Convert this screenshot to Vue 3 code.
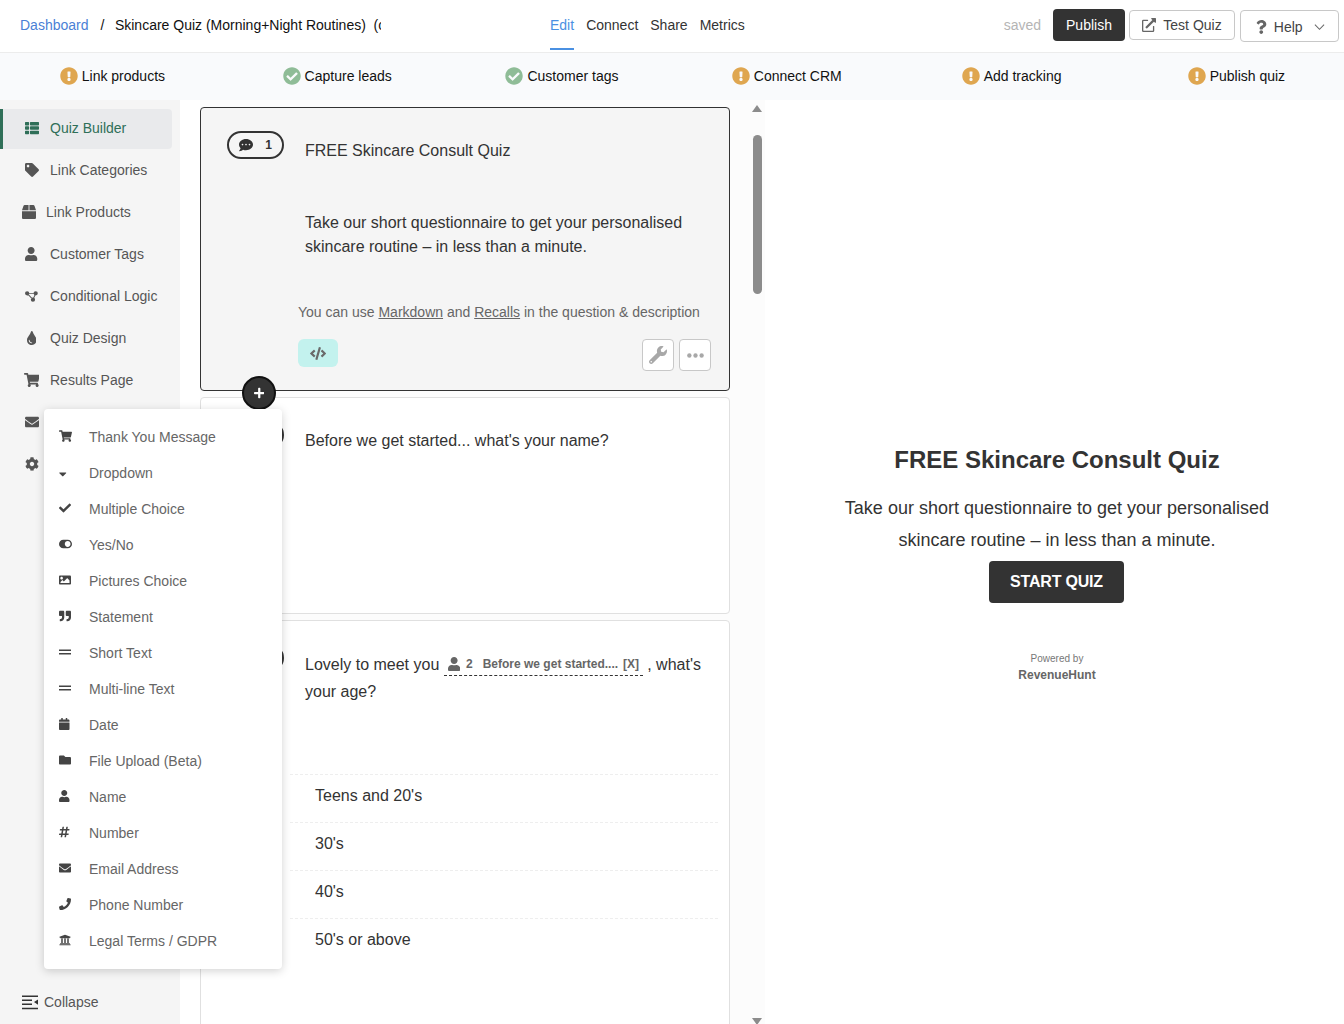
<template>
  <div class="page">
    <header class="topbar">
      <div class="crumbs">
        <a class="crumb-link">Dashboard</a>
        <span class="crumb-sep">/</span>
        <span class="crumb-title">Skincare Quiz (Morning+Night Routines)&nbsp; (copy)</span>
      </div>
      <nav class="tabs">
        <a v-for="(t, i) in tabs" :key="t" class="tab" :class="{ active: i === 0 }">{{ t }}</a>
      </nav>
      <div class="actions">
        <span class="saved">saved</span>
        <button class="btn btn-dark">Publish</button>
        <button class="btn btn-line btn-test"><FaIcon name="external" class="btn-icon" />Test Quiz</button>
        <button class="btn btn-line btn-help">
          <FaIcon name="question" class="btn-icon" />Help
          <svg class="chev" viewBox="0 0 12 8"><path d="M1 1.5l5 5 5-5" fill="none" stroke="currentColor" stroke-width="1.1" /></svg>
        </button>
      </div>
    </header>

    <div class="steps">
      <div v-for="s in steps" :key="s.label" class="step">
        <FaIcon :name="s.done ? 'checkCircle' : 'exclaim'" class="step-icon" :class="s.done ? 'done' : 'todo'" />
        {{ s.label }}
      </div>
    </div>

    <div class="body">
      <aside class="sidebar">
        <a
          v-for="(n, i) in nav"
          :key="n.icon"
          class="nav-item"
          :class="{ active: i === 0, narrow: n.icon === 'box' }"
        >
          <span class="nav-icon"><FaIcon :name="n.icon" class="nav-svg" :class="n.icon" /></span>
          <span v-if="n.label">{{ n.label }}</span>
        </a>
        <a class="collapse">
          <svg class="collapse-icon" viewBox="0 0 16 15">
            <path d="M0 .5h16v1.6H0zM0 4.5h10v1.6H0zM0 8.5h10v1.6H0zM0 12.7h16v1.6H0zM16 4.4v5.4l-4-2.7z" fill="currentColor" />
          </svg>
          Collapse
        </a>
      </aside>

      <main class="builder">
        <section class="card card-selected">
          <div class="card-head">
            <span class="pill"><FaIcon name="comment" class="pill-icon" /><b>1</b></span>
            <div class="question">FREE Skincare Consult Quiz</div>
          </div>
          <p class="description">Take our short questionnaire to get your personalised skincare routine – in less than a minute.</p>
          <p class="hint">You can use <u>Markdown</u> and <u>Recalls</u> in the question &amp; description</p>
          <div class="card-tools">
            <button class="code-btn"><FaIcon name="code" class="code-icon" /></button>
            <span class="tools-right">
              <button class="tool-btn"><FaIcon name="wrench" class="wrench-icon" /></button>
              <button class="tool-btn">
                <svg class="dots" viewBox="0 0 18 5"><circle cx="2.5" cy="2.5" r="2.3" /><circle cx="9" cy="2.5" r="2.3" /><circle cx="15.5" cy="2.5" r="2.3" /></svg>
              </button>
            </span>
          </div>
          <button class="add-btn"><FaIcon name="plus" class="add-icon" /></button>
        </section>

        <section class="card card-name">
          <div class="card-head">
            <span class="pill"><FaIcon name="comment" class="pill-icon" /><b>2</b></span>
            <div class="question">Before we get started... what's your name?</div>
          </div>
        </section>

        <section class="card card-age">
          <div class="card-head">
            <span class="pill"><FaIcon name="comment" class="pill-icon" /><b>3</b></span>
            <div class="question question-age">
              Lovely to meet you
              <span class="recall"><FaIcon name="user" class="recall-icon" /><b class="recall-num">2</b><b>Before we get started....</b><b class="recall-x">[X]</b></span>
              , what's your age?
            </div>
          </div>
          <ul class="options">
            <li v-for="o in ageOptions" :key="o">{{ o }}</li>
          </ul>
        </section>
      </main>

      <div class="scrollbar">
        <span class="arrow arrow-up"></span>
        <span class="thumb"></span>
        <span class="arrow arrow-down"></span>
      </div>

      <section class="preview">
        <h1 class="preview-title">FREE Skincare Consult Quiz</h1>
        <p class="preview-text">Take our short questionnaire to get your personalised skincare routine – in less than a minute.</p>
        <button class="start-btn">START QUIZ</button>
        <div class="powered">Powered by</div>
        <div class="brand">RevenueHunt</div>
      </section>

      <div class="add-menu">
        <div v-for="b in blocks" :key="b.label" class="menu-row">
          <span class="menu-icon"><FaIcon :name="b.icon" class="menu-svg" :class="b.icon" /></span>
          {{ b.label }}
        </div>
      </div>
    </div>
  </div>
</template>

<script setup>
import { h } from 'vue'

const icons = {
  exclaim: [512, 'M504 256c0 136.997-111.043 248-248 248S8 392.997 8 256C8 119.083 119.043 8 256 8s248 111.083 248 248zm-248 50c-25.405 0-46 20.595-46 46s20.595 46 46 46 46-20.595 46-46-20.595-46-46-46zm-43.673-165.346l7.418 136c.347 6.364 5.609 11.346 11.982 11.346h48.546c6.373 0 11.635-4.982 11.982-11.346l7.418-136c.375-6.874-5.098-12.654-11.982-12.654h-63.383c-6.884 0-12.356 5.78-11.981 12.654z'],
  checkCircle: [512, 'M504 256c0 136.967-111.033 248-248 248S8 392.967 8 256 119.033 8 256 8s248 111.033 248 248zM227.314 387.314l184-184c6.248-6.248 6.248-16.379 0-22.627l-22.627-22.627c-6.248-6.249-16.379-6.249-22.628 0L216 308.118l-70.059-70.059c-6.248-6.248-16.379-6.248-22.628 0l-22.627 22.627c-6.248 6.248-6.248 16.379 0 22.627l104 104c6.249 6.249 16.379 6.249 22.628.001z'],
  list: [512, 'M149.333 216v80c0 13.255-10.745 24-24 24H24c-13.255 0-24-10.745-24-24v-80c0-13.255 10.745-24 24-24h101.333c13.255 0 24 10.745 24 24zM0 376v80c0 13.255 10.745 24 24 24h101.333c13.255 0 24-10.745 24-24v-80c0-13.255-10.745-24-24-24H24c-13.255 0-24 10.745-24 24zM125.333 32H24C10.745 32 0 42.745 0 56v80c0 13.255 10.745 24 24 24h101.333c13.255 0 24-10.745 24-24V56c0-13.255-10.745-24-24-24zm80 448H488c13.255 0 24-10.745 24-24v-80c0-13.255-10.745-24-24-24H205.333c-13.255 0-24 10.745-24 24v80c0 13.255 10.745 24 24 24zm-24-424v80c0 13.255 10.745 24 24 24H488c13.255 0 24-10.745 24-24V56c0-13.255-10.745-24-24-24H205.333c-13.255 0-24 10.745-24 24zm24 264H488c13.255 0 24-10.745 24-24v-80c0-13.255-10.745-24-24-24H205.333c-13.255 0-24 10.745-24 24v80c0 13.255 10.745 24 24 24z'],
  tag: [512, 'M0 252.118V48C0 21.49 21.49 0 48 0h204.118a48 48 0 0 1 33.941 14.059l211.882 211.882c18.745 18.745 18.745 49.137 0 67.882L293.823 497.941c-18.745 18.745-49.137 18.745-67.882 0L14.059 286.059A48 48 0 0 1 0 252.118zM112 64c-26.51 0-48 21.49-48 48s21.49 48 48 48 48-21.49 48-48-21.49-48-48-48z'],
  box: [512, 'M509.5 184.6L458.9 32.8C452.4 13.2 434.1 0 413.4 0H272v192h238.7c-.4-2.5-.4-5-1.2-7.4zM240 0H98.6c-20.7 0-39 13.2-45.5 32.8L2.5 184.6c-.8 2.4-.8 4.9-1.2 7.4H240V0zM0 224v240c0 26.5 21.5 48 48 48h416c26.5 0 48-21.5 48-48V224H0z'],
  user: [448, 'M224 256c70.7 0 128-57.3 128-128S294.7 0 224 0 96 57.3 96 128s57.3 128 128 128zm89.6 32h-16.7c-22.2 10.2-46.9 16-72.9 16s-50.6-5.8-72.9-16h-16.7C60.2 288 0 348.2 0 422.4V464c0 26.5 21.5 48 48 48h352c26.5 0 48-21.5 48-48v-41.6c0-74.2-60.2-134.4-134.4-134.4z'],
  // three round nodes joined by thin links
  diagram: [597, 'M0 110a100 100 0 1 1 200 0a100 100 0 1 1-200 0zM397 110a100 100 0 1 1 200 0a100 100 0 1 1-200 0zM270 405a100 100 0 1 1 200 0a100 100 0 1 1-200 0zM100 90H497V130H100zM90 125L120 95L385 385L355 415zM480 95L520 115L390 420L350 400z'],
  tint: [352, 'M205.22 22.09c-7.94-28.78-49.44-30.12-58.44 0C100.01 179.85 0 222.72 0 333.91 0 432.35 78.72 512 176 512s176-79.65 176-178.09c0-111.75-99.79-153.34-146.78-311.82zM176 448c-61.75 0-112-50.25-112-112 0-8.84 7.16-16 16-16s16 7.16 16 16c0 44.11 35.89 80 80 80 8.84 0 16 7.16 16 16s-7.16 16-16 16z'],
  cart: [576, 'M528.12 301.319l47.273-208C578.806 78.301 567.391 64 551.99 64H159.208l-9.166-44.81C147.758 8.021 137.93 0 126.529 0H24C10.745 0 0 10.745 0 24v16c0 13.255 10.745 24 24 24h69.883l70.248 343.435C147.325 417.1 136 435.222 136 456c0 30.928 25.072 56 56 56s56-25.072 56-56c0-15.674-6.447-29.835-16.824-40h209.647C430.447 426.165 424 440.326 424 456c0 30.928 25.072 56 56 56s56-25.072 56-56c0-22.172-12.888-41.332-31.579-50.405l5.517-24.276c3.413-15.018-8.002-29.319-23.403-29.319H218.117l-6.545-32h293.145c11.206 0 20.92-7.754 23.403-18.681z'],
  envelope: [512, 'M502.3 190.8c3.9-3.1 9.7-.2 9.7 4.7V400c0 26.5-21.5 48-48 48H48c-26.5 0-48-21.5-48-48V195.6c0-5 5.7-7.8 9.7-4.7 22.4 17.4 52.1 39.5 154.1 113.6 21.1 15.4 56.7 47.8 92.2 47.6 35.7.3 72-32.8 92.3-47.6 102-74.1 131.6-96.3 154-113.7zM256 320c23.2.4 56.6-29.2 73.4-41.4 132.7-96.3 142.8-104.7 173.4-128.7 5.8-4.5 9.2-11.5 9.2-18.9v-19c0-26.5-21.5-48-48-48H48C21.5 64 0 85.5 0 112v19c0 7.4 3.4 14.3 9.2 18.9 30.6 23.9 40.7 32.4 173.4 128.7 16.8 12.2 50.2 41.8 73.4 41.4z'],
  cog: [512, 'M487.4 315.7l-42.6-24.6c4.3-23.2 4.3-47 0-70.2l42.6-24.6c4.9-2.8 7.1-8.6 5.5-14-11.1-35.6-30-67.8-54.7-94.6-3.8-4.1-10-5.1-14.8-2.3L380.8 110c-17.9-15.4-38.5-27.3-60.8-35.1V25.8c0-5.6-3.9-10.5-9.4-11.7-36.7-8.2-74.3-7.8-109.2 0-5.5 1.2-9.4 6.1-9.4 11.7V75c-22.2 7.9-42.8 19.8-60.8 35.1L88.7 85.5c-4.9-2.8-11-1.9-14.8 2.3-24.7 26.7-43.6 58.9-54.7 94.6-1.7 5.4.6 11.2 5.5 14L67.3 221c-4.3 23.2-4.3 47 0 70.2l-42.6 24.6c-4.9 2.8-7.1 8.6-5.5 14 11.1 35.6 30 67.8 54.7 94.6 3.8 4.1 10 5.1 14.8 2.3l42.6-24.6c17.9 15.4 38.5 27.3 60.8 35.1v49.2c0 5.6 3.9 10.5 9.4 11.7 36.7 8.2 74.3 7.8 109.2 0 5.5-1.2 9.4-6.1 9.4-11.7v-49.2c22.2-7.9 42.8-19.8 60.8-35.1l42.6 24.6c4.9 2.8 11 1.9 14.8-2.3 24.7-26.7 43.6-58.9 54.7-94.6 1.5-5.5-.7-11.3-5.6-14.1zM256 336c-44.1 0-80-35.9-80-80s35.9-80 80-80 80 35.9 80 80-35.9 80-80 80z'],
  caret: [320, 'M31.3 192h257.3c17.8 0 26.7 21.5 14.1 34.1L174.1 354.8c-7.8 7.8-20.5 7.8-28.3 0L17.2 226.1C4.6 213.5 13.5 192 31.3 192z'],
  check: [512, 'M173.898 439.404l-166.4-166.4c-9.997-9.997-9.997-26.206 0-36.204l36.203-36.204c9.997-9.998 26.207-9.998 36.204 0L192 312.69 432.095 72.596c9.997-9.997 26.207-9.997 36.204 0l36.203 36.204c9.997 9.997 9.997 26.206 0 36.204l-294.4 294.401c-9.998 9.997-26.207 9.997-36.204-.001z'],
  toggle: [576, 'M384 64H192C86 64 0 150 0 256s86 192 192 192h192c106 0 192-86 192-192S490 64 384 64zm0 320c-70.8 0-128-57.3-128-128 0-70.8 57.3-128 128-128 70.8 0 128 57.3 128 128 0 70.8-57.3 128-128 128z'],
  image: [512, 'M464 448H48c-26.51 0-48-21.49-48-48V112c0-26.51 21.49-48 48-48h416c26.51 0 48 21.49 48 48v288c0 26.51-21.49 48-48 48zM112 120c-30.928 0-56 25.072-56 56s25.072 56 56 56 56-25.072 56-56-25.072-56-56-56zM64 384h384V272l-87.515-87.515c-4.686-4.686-12.284-4.686-16.971 0L208 320l-55.515-55.515c-4.686-4.686-12.284-4.686-16.971 0L64 336v48z'],
  quote: [512, 'M464 32H336c-26.5 0-48 21.5-48 48v128c0 26.5 21.5 48 48 48h80v64c0 35.3-28.7 64-64 64h-8c-13.3 0-24 10.7-24 24v48c0 13.3 10.7 24 24 24h8c88.4 0 160-71.6 160-160V80c0-26.5-21.5-48-48-48zm-288 0H48C21.5 32 0 53.5 0 80v128c0 26.5 21.5 48 48 48h80v64c0 35.3-28.7 64-64 64h-8c-13.3 0-24 10.7-24 24v48c0 13.3 10.7 24 24 24h8c88.4 0 160-71.6 160-160V80c0-26.5-21.5-48-48-48z'],
  equals: [512, 'M0 150h512v66H0zM0 296h512v66H0z'],
  calendar: [448, 'M12 192h424c6.6 0 12 5.4 12 12v260c0 26.5-21.5 48-48 48H48c-26.5 0-48-21.5-48-48V204c0-6.6 5.4-12 12-12zm436-44v-36c0-26.5-21.5-48-48-48h-48V12c0-6.6-5.4-12-12-12h-40c-6.6 0-12 5.4-12 12v52H160V12c0-6.6-5.4-12-12-12h-40c-6.6 0-12 5.4-12 12v52H48C21.5 64 0 85.5 0 112v36c0 6.6 5.4 12 12 12h424c6.6 0 12-5.4 12-12z'],
  folder: [512, 'M464 128H272l-64-64H48C21.49 64 0 85.49 0 112v288c0 26.51 21.49 48 48 48h416c26.51 0 48-21.49 48-48V176c0-26.51-21.49-48-48-48z'],
  hashtag: [448, 'M440.667 182.109l7.143-40c1.313-7.355-4.342-14.109-11.813-14.109h-74.81l14.623-81.891C377.123 38.754 371.468 32 363.997 32h-40.632a12 12 0 0 0-11.813 9.891L296.175 128H197.54l14.623-81.891C213.477 38.754 207.822 32 200.35 32h-40.632a12 12 0 0 0-11.813 9.891L132.528 128H53.432a12 12 0 0 0-11.813 9.891l-7.143 40C33.163 185.246 38.818 192 46.289 192h74.81L98.242 320H19.146a12 12 0 0 0-11.813 9.891l-7.143 40C-1.123 377.246 4.532 384 12.003 384h74.81L72.19 465.891C70.877 473.246 76.532 480 84.003 480h40.632a12 12 0 0 0 11.813-9.891L151.826 384h98.634l-14.623 81.891C234.523 473.246 240.178 480 247.65 480h40.632a12 12 0 0 0 11.813-9.891L315.472 384h79.096a12 12 0 0 0 11.813-9.891l7.143-40c1.313-7.355-4.342-14.109-11.813-14.109h-74.81l22.857-128h79.096a12 12 0 0 0 11.813-9.891zM261.889 320h-98.634l22.857-128h98.634l-22.857 128z'],
  phone: [512, 'M493.4 24.6l-104-24c-11.3-2.6-22.9 3.3-27.5 13.9l-48 112c-4.2 9.8-1.4 21.3 6.9 28l60.6 49.6c-36 76.7-98.9 140.5-177.2 177.2l-49.6-60.6c-6.8-8.3-18.2-11.1-28-6.9l-112 48C3.9 366.5-2 378.1.6 389.4l24 104C27.1 504.2 36.7 512 48 512c256.1 0 464-207.5 464-464 0-11.2-7.7-20.9-18.6-23.4z'],
  bank: [512, 'M496 128v16a8 8 0 0 1-8 8h-24v12c0 6.627-5.373 12-12 12H60c-6.627 0-12-5.373-12-12v-12H24a8 8 0 0 1-8-8v-16a8 8 0 0 1 4.941-7.392l232-88a7.996 7.996 0 0 1 6.118 0l232 88A8 8 0 0 1 496 128zm-24 304H40c-13.255 0-24 10.745-24 24v16a8 8 0 0 0 8 8h464a8 8 0 0 0 8-8v-16c0-13.255-10.745-24-24-24zM96 192v192H60c-6.627 0-12 5.373-12 12v20h416v-20c0-6.627-5.373-12-12-12h-36V192h-64v192h-64V192h-64v192h-64V192H96z'],
  comment: [512, 'M256 32C114.6 32 0 125.1 0 240c0 49.6 21.4 95 57 130.7C44.5 421.1 2.7 466 2.2 466.5c-2.2 2.3-2.8 5.7-1.5 8.7S4.8 480 8 480c66.3 0 116-31.8 140.6-51.4 32.7 12.3 69 19.4 107.4 19.4 141.4 0 256-93.1 256-208S397.4 32 256 32zM128 272c-17.7 0-32-14.3-32-32s14.3-32 32-32 32 14.3 32 32-14.3 32-32 32zm128 0c-17.7 0-32-14.3-32-32s14.3-32 32-32 32 14.3 32 32-14.3 32-32 32zm128 0c-17.7 0-32-14.3-32-32s14.3-32 32-32 32 14.3 32 32-14.3 32-32 32z'],
  code: [640, 'M278.9 511.5l-61-17.7c-6.4-1.8-10-8.5-8.2-14.9L346.2 8.7c1.8-6.4 8.5-10 14.9-8.2l61 17.7c6.4 1.8 10 8.5 8.2 14.9L293.8 503.3c-1.9 6.4-8.5 10.1-14.9 8.2zm-114-112.2l43.5-46.4c4.6-4.9 4.3-12.7-.8-17.2L117 256l90.6-79.7c5.1-4.5 5.5-12.3.8-17.2l-43.5-46.4c-4.5-4.8-12.1-5.1-17-.5L3.8 247.2c-5.1 4.7-5.1 12.8 0 17.5l144.1 135.1c4.9 4.6 12.5 4.4 17-.5zm327.2.6l144.1-135.1c5.1-4.7 5.1-12.8 0-17.5L492.1 112.1c-4.8-4.5-12.4-4.3-17 .5L431.6 159c-4.6 4.9-4.3 12.7.8 17.2L523 256l-90.6 79.7c-5.1 4.5-5.5 12.3-.8 17.2l43.5 46.4c4.5 4.9 12.1 5.1 17 .6z'],
  wrench: [512, 'M507.73 109.1c-2.24-9.03-13.54-12.09-20.12-5.51l-74.36 74.36-67.88-11.31-11.31-67.88 74.36-74.36c6.62-6.62 3.43-17.9-5.66-20.16-47.38-11.74-99.55.91-136.58 37.93-39.64 39.64-50.55 97.1-34.05 147.2L18.74 402.76c-24.99 24.99-24.99 65.51 0 90.5 24.99 24.99 65.51 24.99 90.5 0l213.21-213.21c50.12 16.71 107.47 5.68 147.37-34.22 37.07-37.07 49.7-89.32 37.91-136.73zM64 472c-13.25 0-24-10.75-24-24 0-13.26 10.75-24 24-24s24 10.74 24 24c0 13.25-10.75 24-24 24z'],
  external: [512, 'M432 288H416a16 16 0 0 0-16 16V458a6 6 0 0 1-6 6H54a6 6 0 0 1-6-6V118a6 6 0 0 1 6-6H208a16 16 0 0 0 16-16V80a16 16 0 0 0-16-16H48A48 48 0 0 0 0 112V464a48 48 0 0 0 48 48H400a48 48 0 0 0 48-48V304A16 16 0 0 0 432 288ZM488 0h-128c-21.37 0-32.05 25.91-17 41l35.73 35.73L135 320.37a24 24 0 0 0 0 34L157.67 377a24 24 0 0 0 34 0L435.28 133.32 471 169c15 15 41 4.5 41-17V24A24 24 0 0 0 488 0Z'],
  question: [384, 'M202.021 0C122.202 0 70.503 32.703 29.914 91.026c-7.363 10.58-5.093 25.086 5.178 32.874l43.138 32.709c10.373 7.865 25.132 6.026 33.253-4.148 25.049-31.381 43.63-49.449 82.757-49.449 30.764 0 68.816 19.799 68.816 49.631 0 22.552-18.617 34.134-48.993 51.164-35.423 19.86-82.299 44.576-82.299 106.405V320c0 13.255 10.745 24 24 24h72.471c13.255 0 24-10.745 24-24v-5.773c0-42.86 125.268-44.645 125.268-160.627C377.504 66.256 286.902 0 202.021 0zM192 373.459c-38.196 0-69.271 31.075-69.271 69.271 0 38.195 31.075 69.27 69.271 69.27s69.271-31.075 69.271-69.271-31.075-69.27-69.271-69.27z'],
  plus: [448, 'M416 208H272V64c0-17.67-14.33-32-32-32h-32c-17.67 0-32 14.33-32 32v144H32c-17.67 0-32 14.33-32 32v32c0 17.67 14.33 32 32 32h144v144c0 17.67 14.33 32 32 32h32c17.67 0 32-14.33 32-32V304h144c17.67 0 32-14.33 32-32v-32c0-17.67-14.33-32-32-32z']
}

// one svg per glyph, width comes from the glyph's own box
const FaIcon = (props) => {
  const [w, d] = icons[props.name]
  return h('svg', { viewBox: `0 0 ${w} 512`, style: { width: `${w / 512}em`, height: '1em' } }, [
    h('path', { d, fill: 'currentColor' })
  ])
}
FaIcon.props = ['name']

const tabs = ['Edit', 'Connect', 'Share', 'Metrics']

const steps = [
  { label: 'Link products', done: false },
  { label: 'Capture leads', done: true },
  { label: 'Customer tags', done: true },
  { label: 'Connect CRM', done: false },
  { label: 'Add tracking', done: false },
  { label: 'Publish quiz', done: false }
]

const nav = [
  { icon: 'list', label: 'Quiz Builder' },
  { icon: 'tag', label: 'Link Categories' },
  { icon: 'box', label: 'Link Products' },
  { icon: 'user', label: 'Customer Tags' },
  { icon: 'diagram', label: 'Conditional Logic' },
  { icon: 'tint', label: 'Quiz Design' },
  { icon: 'cart', label: 'Results Page' },
  { icon: 'envelope', label: '' },
  { icon: 'cog', label: '' }
]

const blocks = [
  { icon: 'cart', label: 'Thank You Message' },
  { icon: 'caret', label: 'Dropdown' },
  { icon: 'check', label: 'Multiple Choice' },
  { icon: 'toggle', label: 'Yes/No' },
  { icon: 'image', label: 'Pictures Choice' },
  { icon: 'quote', label: 'Statement' },
  { icon: 'equals', label: 'Short Text' },
  { icon: 'equals', label: 'Multi-line Text' },
  { icon: 'calendar', label: 'Date' },
  { icon: 'folder', label: 'File Upload (Beta)' },
  { icon: 'user', label: 'Name' },
  { icon: 'hashtag', label: 'Number' },
  { icon: 'envelope', label: 'Email Address' },
  { icon: 'phone', label: 'Phone Number' },
  { icon: 'bank', label: 'Legal Terms / GDPR' }
]

const ageOptions = ["Teens and 20's", "30's", "40's", "50's or above"]
</script>

<style>
html, body {
  margin: 0;
  background: #fff;
}
</style>

<style scoped>
.page {
  width: 1344px;
  height: 1024px;
  overflow: hidden;
  display: flex;
  flex-direction: column;
  font-family: "Liberation Sans", Arial, sans-serif;
  font-size: 14px;
  color: #333;
}

.topbar {
  height: 52px;
  flex: none;
  display: flex;
  align-items: center;
  border-bottom: 1px solid #ececec;
}

.crumbs {
  width: 381px;
  padding: 0 0 2px 20px;
  box-sizing: border-box;
  display: flex;
  white-space: nowrap;
  overflow: hidden;
  color: #111;
}

.crumb-link {
  color: #4a7fd6;
}

.crumb-sep {
  margin: 0 10.5px 0 12px;
}

.tabs {
  margin-left: 169px;
  display: flex;
  gap: 12px;
  height: 100%;
}

.tab {
  line-height: 50px;
  color: #333;
}

.tab.active {
  color: #4a90e2;
  box-shadow: inset 0 -2px 0 #4a90e2;
  height: 50px;
}

.actions {
  margin-left: auto;
  padding: 9px 5px 0 0;
  align-self: flex-start;
  display: flex;
  align-items: flex-start;
}

.saved {
  color: #b5b5b5;
  margin-right: 12px;
  line-height: 32px;
}

button {
  font-family: inherit;
  padding: 0;
  cursor: pointer;
}

.btn {
  font-size: 14px;
  border-radius: 4px;
  display: inline-flex;
  align-items: center;
  justify-content: center;
}

.btn-dark {
  width: 72px;
  height: 32px;
  background: #333;
  color: #fff;
  border: 0;
  margin-right: 4px;
}

.btn-line {
  background: #fff;
  border: 1px solid #c8c8c8;
  color: #444;
  margin-top: 1px;
}

.btn-test {
  width: 106px;
  height: 30px;
  margin-right: 5px;
}

.btn-help {
  width: 99px;
  height: 32px;
  padding: 1px 0 0 2px;
}

.btn-icon {
  font-size: 14px;
  color: #666;
  margin-right: 7px;
}

.chev {
  width: 11px;
  height: 8px;
  margin-left: 11px;
  color: #666;
}

.steps {
  height: 47px;
  flex: none;
  box-sizing: border-box;
  padding-bottom: 2px;
  display: grid;
  grid-template-columns: repeat(6, 224.8px);
  justify-items: center;
  align-items: center;
  background: #f9fafc;
  color: #111;
  white-space: nowrap;
}

.step {
  display: flex;
  align-items: center;
  gap: 4px;
}

.step-icon {
  font-size: 18px;
}

.step-icon.todo {
  color: #dfa650;
}

.step-icon.done {
  color: #8fbc97;
}

.body {
  flex: 1;
  min-height: 0;
  display: flex;
  position: relative;
}

.sidebar {
  width: 180px;
  flex: none;
  box-sizing: border-box;
  padding-top: 9px;
  background: #f5f5f5;
  display: flex;
  flex-direction: column;
  color: #555;
}

.nav-item {
  height: 40px;
  width: 172px;
  flex: none;
  margin-bottom: 2px;
  box-sizing: border-box;
  padding: 0 0 2px 23px;
  display: flex;
  align-items: center;
  gap: 10px;
  border-radius: 0 4px 4px 0;
}

.nav-item.active {
  background: #e9eaec;
  border-left: 3px solid #2f6f58;
  padding-left: 20px;
  color: #2f6f58;
}

.nav-icon {
  width: 17px;
  height: 16px;
  display: flex;
  align-items: center;
  justify-content: center;
  font-size: 14px;
}

.nav-svg.diagram {
  font-size: 11px;
}

.nav-item.narrow {
  padding-left: 22px;
}

.nav-item.narrow .nav-icon {
  width: 14px;
}

.collapse {
  margin-top: auto;
  margin-bottom: 14px;
  padding-left: 22px;
  display: flex;
  align-items: center;
  gap: 6px;
}

.collapse-icon {
  width: 16px;
  height: 15px;
  color: #333;
}

.builder {
  width: 550px;
  flex: none;
  box-sizing: border-box;
  padding: 7px 0 0 20px;
  background: linear-gradient(to right, #fff 20px, #fcfcfc 20px);
  display: flex;
  flex-direction: column;
  gap: 6px;
}

.card {
  flex: none;
  box-sizing: border-box;
  border: 1px solid #e0e0e0;
  border-radius: 4px;
  background: #fff;
  position: relative;
  padding: 23px 18px 0 26px;
  color: #333;
}

.card-selected {
  height: 284px;
  border-color: #333;
  background: #f5f5f5;
}

.card-name {
  height: 217px;
}

.card-age {
  height: 420px;
}

.card-head {
  display: flex;
  align-items: flex-start;
}

.pill {
  width: 57px;
  height: 28px;
  flex: none;
  box-sizing: border-box;
  border: 2px solid #333;
  border-radius: 14px;
  display: flex;
  align-items: center;
  padding: 0 10px 1px;
  justify-content: space-between;
  font-size: 12px;
  color: #333;
  margin-right: 21px;
}

.pill-icon {
  font-size: 14px;
}

.question {
  font-size: 16px;
  line-height: 27px;
  padding-top: 6px;
}

.question-age {
  padding-top: 7px;
  width: 400px;
}

.description {
  font-size: 16px;
  line-height: 24px;
  margin: 47px 0 0 78px;
  width: 400px;
}

.hint {
  margin: 43px 0 0 71px;
  color: #666;
  white-space: nowrap;
  line-height: 20px;
}

.card-tools {
  display: flex;
  justify-content: space-between;
  margin: 17px 0 0 71px;
}

.code-btn {
  width: 40px;
  height: 28px;
  border: 0;
  border-radius: 6px;
  background: #c3f2ee;
  color: #6a6a6a;
  display: flex;
  align-items: center;
  justify-content: center;
}

.code-icon {
  font-size: 13px;
}

.tools-right {
  display: flex;
  gap: 5px;
}

.tool-btn {
  width: 32px;
  height: 32px;
  border: 1px solid #c8c8c8;
  border-radius: 4px;
  background: #fff;
  color: #a8a8a8;
  display: flex;
  align-items: center;
  justify-content: center;
}

.wrench-icon {
  font-size: 18px;
}

.dots {
  width: 17px;
  height: 5px;
  fill: #a8a8a8;
}

.add-btn {
  position: absolute;
  left: 41px;
  bottom: -20px;
  width: 34px;
  height: 34px;
  border-radius: 50%;
  border: 2px solid #111;
  background: #333;
  color: #fff;
  display: flex;
  align-items: center;
  justify-content: center;
  z-index: 2;
}

.add-icon {
  font-size: 12px;
}

.recall {
  display: inline-flex;
  align-items: center;
  height: 24px;
  font-size: 12px;
  color: #666;
  border-bottom: 1px dashed #333;
  padding: 2px 0 0 4px;
  vertical-align: -1px;
  white-space: nowrap;
  width: 199px;
  box-sizing: border-box;
}

.recall-icon {
  font-size: 14px;
  margin-right: 6px;
}

.recall-num {
  margin-right: 10px;
}

.recall-x {
  margin-left: 5px;
}

.options {
  list-style: none;
  margin: 69px 0 0 63px;
  padding: 0;
  width: 428px;
  font-size: 16px;
}

.options li {
  height: 48px;
  box-sizing: border-box;
  border-top: 1px dashed #eee;
  padding: 11px 0 0 25px;
  line-height: 20px;
}

.scrollbar {
  width: 35px;
  flex: none;
  box-sizing: border-box;
  padding-left: 23px;
  background: #fcfcfc;
  display: flex;
  flex-direction: column;
  align-items: flex-start;
}

.arrow {
  width: 0;
  height: 0;
  margin-left: -1px;
  border-left: 5px solid transparent;
  border-right: 5px solid transparent;
}

.arrow-up {
  margin-top: 5px;
  border-bottom: 7px solid #8c8c8c;
}

.thumb {
  width: 9px;
  height: 159px;
  margin-top: 23px;
  border-radius: 5px;
  background: #8c8c8c;
}

.arrow-down {
  margin-top: auto;
  margin-bottom: -1px;
  border-top: 7px solid #8c8c8c;
}

.preview {
  flex: 1;
  display: flex;
  flex-direction: column;
  align-items: center;
  padding: 344px 0 0 5px;
  color: #333;
}

.preview-title {
  font-size: 24px;
  line-height: 32px;
  margin: 0;
  font-weight: bold;
}

.preview-text {
  font-size: 18px;
  line-height: 32px;
  margin: 16px 0 0;
  width: 450px;
  text-align: center;
}

.start-btn {
  width: 135px;
  height: 42px;
  margin: 5px 1px 0 0;
  border: 0;
  border-radius: 4px;
  background: #333;
  color: #fff;
  font-size: 16px;
  font-weight: bold;
  letter-spacing: -0.2px;
}

.powered {
  margin-top: 50px;
  font-size: 10px;
  color: #777;
  line-height: 12px;
}

.brand {
  margin-top: 3px;
  font-size: 12px;
  font-weight: bold;
  color: #666;
  line-height: 14px;
}

.add-menu {
  position: absolute;
  left: 44px;
  top: 309px;
  width: 238px;
  padding: 10px 0;
  background: #fff;
  border-radius: 4px;
  box-shadow: 0 2px 10px rgba(0, 0, 0, 0.18);
  z-index: 3;
  color: #666;
}

.menu-row {
  height: 36px;
  padding-left: 15px;
  display: flex;
  align-items: center;
  gap: 17px;
}

.menu-icon {
  width: 13px;
  height: 14px;
  display: flex;
  align-items: center;
  justify-content: flex-start;
  font-size: 12px;
  color: #444;
  margin-top: -2px;
}

.menu-svg.caret {
  margin-top: 3px;
}
</style>
